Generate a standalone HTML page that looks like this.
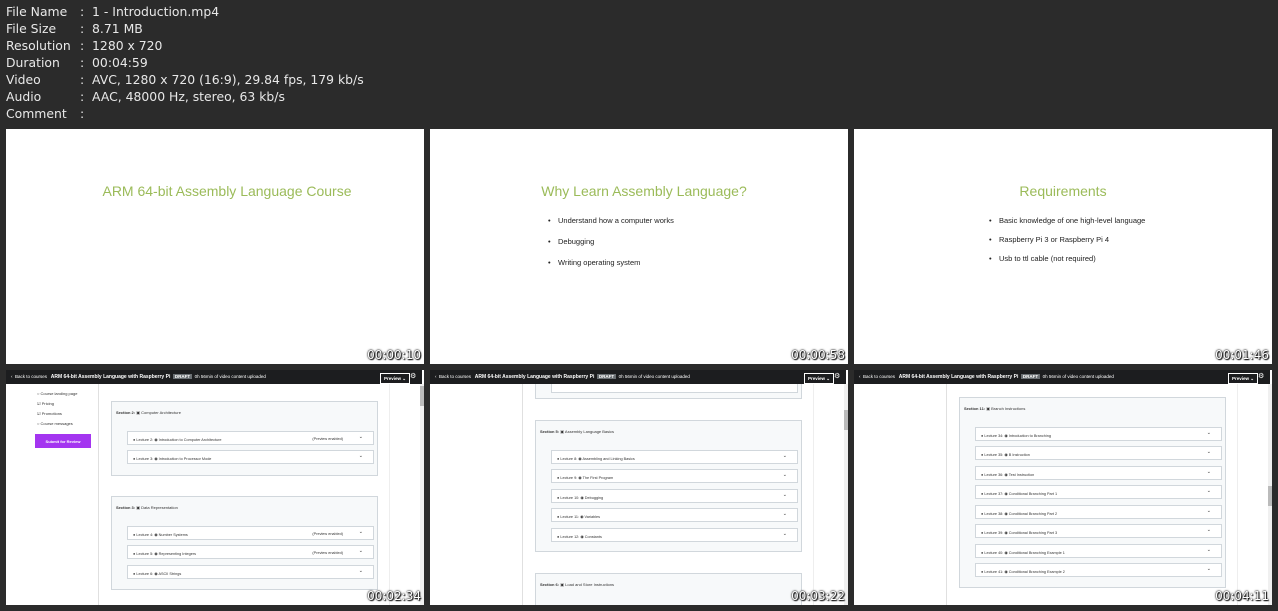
<!DOCTYPE html>
<html><head><meta charset="utf-8"><style>
*{margin:0;padding:0;box-sizing:border-box}
body{width:1278px;height:611px;background:#2b2b2b;position:relative;overflow:hidden;font-family:"DejaVu Sans","Liberation Sans",sans-serif}
.info{position:absolute;left:6px;top:3px;color:#e8e8e8;font-size:12.4px;line-height:17px}
.info div{white-space:pre;position:relative;height:17px}
.info i{font-style:normal;position:absolute;left:74px}
.t{position:absolute;background:#fff;overflow:hidden;width:418px;height:235px}
.ts{position:absolute;right:3px;bottom:2px;color:#fff;font-size:12px;font-family:"DejaVu Sans",sans-serif;text-shadow:0 0 2px #000,0 0 1px #000,1px 1px 1px #000}
.ttl{position:absolute;left:0;width:100%;text-align:center;color:#9bbb59;font-family:"Liberation Sans",sans-serif;font-size:14px;top:54px}
.b{position:absolute;font-family:"Liberation Sans",sans-serif;font-size:7.5px;color:#222}
.b:before{content:"•";position:absolute;left:-10px}
.a{position:absolute}
.hdr{position:absolute;left:0;top:0;width:416px;height:14px;background:#1c1d1f;color:#fff;font-size:4.5px;font-family:"Liberation Sans",sans-serif}
.hdr span{position:absolute;top:4px}
.sec{position:absolute;background:#f7f9fa;border:1px solid #d1d7dc}
.lec{position:absolute;background:#fff;border:1px solid #d1d7dc;height:14px;font-size:3.8px;font-family:"Liberation Sans",sans-serif;color:#333;padding:4.5px 0 0 5px}
.lec:after{content:"⌄";position:absolute;right:10px;top:2px;font-size:5px}
.sl{position:absolute;font-size:4px;font-family:"Liberation Sans",sans-serif;color:#333}
</style></head><body>
<div class="info">
<div>File Name<i>:  1 - Introduction.mp4</i></div>
<div>File Size<i>:  8.71 MB</i></div>
<div>Resolution<i>:  1280 x 720</i></div>
<div>Duration<i>:  00:04:59</i></div>
<div>Video<i>:  AVC, 1280 x 720 (16:9), 29.84 fps, 179 kb/s</i></div>
<div>Audio<i>:  AAC, 48000 Hz, stereo, 63 kb/s</i></div>
<div>Comment<i>:</i></div>
</div>

<div class="t" style="left:6px;top:129px"><div class="ttl" style="left:12px">ARM 64-bit Assembly Language Course</div><div class="ts">00:00:10</div></div>
<div class="t" style="left:430px;top:129px"><div class="ttl" style="left:5px">Why Learn Assembly Language?</div>
<div class="b" style="left:128px;top:87px">Understand how a computer works</div>
<div class="b" style="left:128px;top:108px">Debugging</div>
<div class="b" style="left:128px;top:129px">Writing operating system</div>
<div class="ts">00:00:58</div></div>
<div class="t" style="left:854px;top:129px"><div class="ttl">Requirements</div>
<div class="b" style="left:145px;top:87px">Basic knowledge of one high-level language</div>
<div class="b" style="left:145px;top:106px">Raspberry Pi 3 or Raspberry Pi 4</div>
<div class="b" style="left:145px;top:125px">Usb to ttl cable (not required)</div>
<div class="ts">00:01:46</div></div>

<!-- row 2 thumb 1 -->
<div class="t" style="left:6px;top:370px">
<div class="a" style="left:92px;top:14px;width:1px;height:221px;background:#e0e0e0"></div>
<div class="a" style="left:383px;top:14px;width:1px;height:221px;background:#eee"></div>
<div class="a" style="left:414px;top:14px;width:4px;height:221px;background:#f0f0f0"></div>
<div class="a" style="left:414px;top:16px;width:4px;height:20px;background:#bbb"></div>
<div class="sl" style="left:31px;top:21px">○ Course landing page</div>
<div class="sl" style="left:31px;top:31px">☑ Pricing</div>
<div class="sl" style="left:31px;top:41px">☑ Promotions</div>
<div class="sl" style="left:31px;top:51px">○ Course messages</div>
<div class="a" style="left:29px;top:64px;width:56px;height:14px;background:#a435f0;color:#fff;font-size:4px;font-family:'Liberation Sans',sans-serif;font-weight:bold;text-align:center;padding-top:5px">Submit for Review</div>
<div class="sec" style="left:105px;top:31px;width:267px;height:75px"><div class="sl" style="left:4px;top:8px"><b>Section 2:</b> ▣ Computer Architecture</div></div>
<div class="lec" style="left:121px;top:61px;width:247px">● Lecture 2: ◉ Introduction to Computer Architecture<span style="position:absolute;right:30px">(Preview enabled)</span></div>
<div class="lec" style="left:121px;top:80px;width:247px">● Lecture 3: ◉ Introduction to Processor Mode</div>
<div class="sec" style="left:105px;top:126px;width:267px;height:94px"><div class="sl" style="left:4px;top:8px"><b>Section 3:</b> ▣ Data Representation</div></div>
<div class="lec" style="left:121px;top:156px;width:247px">● Lecture 4: ◉ Number Systems<span style="position:absolute;right:30px">(Preview enabled)</span></div>
<div class="lec" style="left:121px;top:175px;width:247px">● Lecture 5: ◉ Representing Integers<span style="position:absolute;right:30px">(Preview enabled)</span></div>
<div class="lec" style="left:121px;top:195px;width:247px">● Lecture 6: ◉ ASCII Strings</div>
<div class="hdr"><span style="left:5px">‹ &nbsp;Back to courses &nbsp;&nbsp;<b style="font-size:5px">ARM 64-bit Assembly Language with Raspberry Pi</b> &nbsp;<b style="background:#6a6f73;padding:0 2px">DRAFT</b> &nbsp;0h 56min of video content uploaded</span><span style="left:374px;top:3px;border:1px solid #fff;padding:1.5px 3px;font-weight:bold">Preview ⌄</span><span style="left:404px;top:2px;font-size:7px">⚙</span></div>
<div class="ts">00:02:34</div></div>

<!-- row 2 thumb 2 -->
<div class="t" style="left:430px;top:370px">
<div class="a" style="left:92px;top:14px;width:1px;height:221px;background:#e0e0e0"></div>
<div class="a" style="left:383px;top:14px;width:1px;height:221px;background:#eee"></div>
<div class="a" style="left:414px;top:14px;width:4px;height:221px;background:#f0f0f0"></div>
<div class="a" style="left:414px;top:40px;width:4px;height:20px;background:#bbb"></div>
<div class="sec" style="left:105px;top:-10px;width:267px;height:39px"></div>
<div class="lec" style="left:121px;top:-2px;width:247px;height:25px"></div>
<div class="sec" style="left:105px;top:50px;width:267px;height:132px"><div class="sl" style="left:4px;top:8px"><b>Section 5:</b> ▣ Assembly Language Basics</div></div>
<div class="lec" style="left:121px;top:80px;width:247px">● Lecture 8: ◉ Assembling and Linking Basics</div>
<div class="lec" style="left:121px;top:99px;width:247px">● Lecture 9: ◉ The First Program</div>
<div class="lec" style="left:121px;top:119px;width:247px">● Lecture 10: ◉ Debugging</div>
<div class="lec" style="left:121px;top:138px;width:247px">● Lecture 11: ◉ Variables</div>
<div class="lec" style="left:121px;top:158px;width:247px">● Lecture 12: ◉ Constants</div>
<div class="sec" style="left:105px;top:203px;width:267px;height:50px"><div class="sl" style="left:4px;top:8px"><b>Section 6:</b> ▣ Load and Store Instructions</div></div>
<div class="hdr"><span style="left:5px">‹ &nbsp;Back to courses &nbsp;&nbsp;<b style="font-size:5px">ARM 64-bit Assembly Language with Raspberry Pi</b> &nbsp;<b style="background:#6a6f73;padding:0 2px">DRAFT</b> &nbsp;0h 56min of video content uploaded</span><span style="left:374px;top:3px;border:1px solid #fff;padding:1.5px 3px;font-weight:bold">Preview ⌄</span><span style="left:404px;top:2px;font-size:7px">⚙</span></div>
<div class="ts">00:03:22</div></div>

<!-- row 2 thumb 3 -->
<div class="t" style="left:854px;top:370px">
<div class="a" style="left:92px;top:14px;width:1px;height:221px;background:#e0e0e0"></div>
<div class="a" style="left:383px;top:14px;width:1px;height:221px;background:#eee"></div>
<div class="a" style="left:414px;top:14px;width:4px;height:221px;background:#f0f0f0"></div>
<div class="a" style="left:414px;top:116px;width:4px;height:20px;background:#bbb"></div>
<div class="sec" style="left:105px;top:27px;width:267px;height:191px"><div class="sl" style="left:4px;top:8px"><b>Section 11:</b> ▣ Branch Instructions</div></div>
<div class="lec" style="left:121px;top:57px;width:247px">● Lecture 34: ◉ Introduction to Branching</div>
<div class="lec" style="left:121px;top:76px;width:247px">● Lecture 35: ◉ B Instruction</div>
<div class="lec" style="left:121px;top:96px;width:247px">● Lecture 36: ◉ Test Instruction</div>
<div class="lec" style="left:121px;top:115px;width:247px">● Lecture 37: ◉ Conditional Branching Part 1</div>
<div class="lec" style="left:121px;top:135px;width:247px">● Lecture 38: ◉ Conditional Branching Part 2</div>
<div class="lec" style="left:121px;top:154px;width:247px">● Lecture 39: ◉ Conditional Branching Part 3</div>
<div class="lec" style="left:121px;top:174px;width:247px">● Lecture 40: ◉ Conditional Branching Example 1</div>
<div class="lec" style="left:121px;top:193px;width:247px">● Lecture 41: ◉ Conditional Branching Example 2</div>
<div class="hdr"><span style="left:5px">‹ &nbsp;Back to courses &nbsp;&nbsp;<b style="font-size:5px">ARM 64-bit Assembly Language with Raspberry Pi</b> &nbsp;<b style="background:#6a6f73;padding:0 2px">DRAFT</b> &nbsp;0h 56min of video content uploaded</span><span style="left:374px;top:3px;border:1px solid #fff;padding:1.5px 3px;font-weight:bold">Preview ⌄</span><span style="left:404px;top:2px;font-size:7px">⚙</span></div>
<div class="ts">00:04:11</div></div>
</body></html>
